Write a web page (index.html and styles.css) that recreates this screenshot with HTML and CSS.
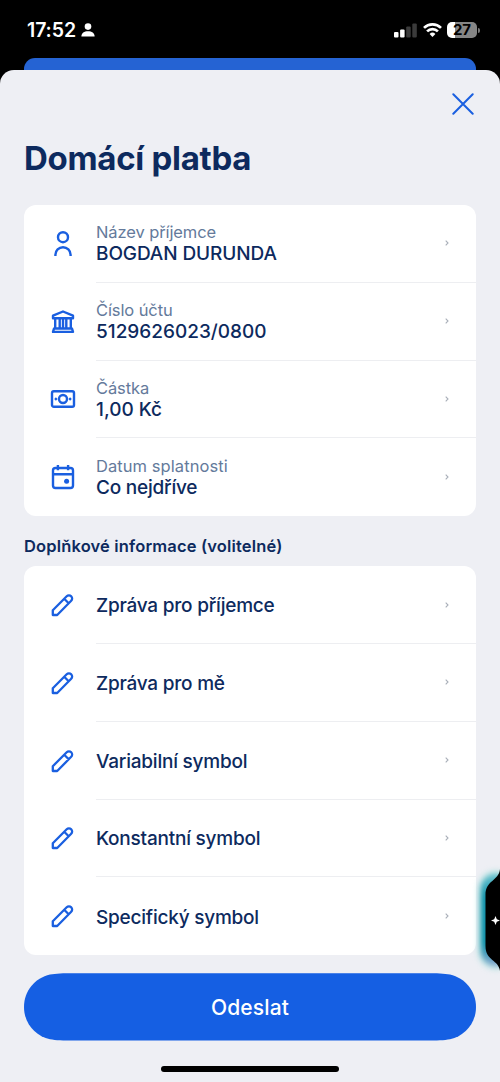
FILE: index.html
```html
<!DOCTYPE html>
<html lang="cs">
<head>
<meta charset="utf-8">
<title>Domácí platba</title>
<link rel="stylesheet" href="styles.css">
</head>
<body>
<svg class="defs" aria-hidden="true">
  <symbol id="pencil" viewBox="0 0 24 24"><path d="M2.800 22v-4.800L16.700 3.300a3.150 3.150 0 0 1 4.500 4.500L7.200 22zM14.200 5.800l4.500 4.500" fill="none" stroke="currentColor" stroke-width="2.300" stroke-linejoin="round"/></symbol>
  <symbol id="chevron" viewBox="0 0 4 6"><path d="M.7.6 3 3 .7 5.400" fill="none" stroke="currentColor" stroke-width="1.100"/></symbol>
</svg>
<header class="status">
  <div class="status-left">
    <span class="time">17:52</span>
    <svg width="14" height="14" viewBox="0 0 14 14" fill="#fff"><circle cx="7" cy="3.6" r="3.3"/><path d="M.4 13.4C.4 10 3.2 8.2 7 8.2s6.600 1.800 6.600 5.200z"/></svg>
  </div>
  <div class="status-right">
    <svg width="23" height="15" viewBox="0 0 23 15"><g fill="#fff"><rect x="0" y="9" width="4.500" height="5.500" rx="1.100"/><rect x="6.100" y="6.500" width="4.500" height="8" rx="1.100"/></g><g fill="#3b3b3b"><rect x="12.200" y="3.500" width="4.500" height="11" rx="1.100"/><rect x="18.300" y=".5" width="4.500" height="14" rx="1.100"/></g></svg>
    <svg class="wifi" width="19" height="14" viewBox="0 0 19 14" fill="none" stroke="#fff" stroke-width="2.700"><path d="M1 4.900a12.200 12.200 0 0 1 17 0M4.100 8.400a7.700 7.700 0 0 1 10.800 0"/><path d="M9.500 13.900 6.600 11a4.100 4.100 0 0 1 5.800 0z" fill="#fff" stroke="none"/></svg>
    <div class="battery">27</div>
    <span class="battery-tip"></span>
  </div>
</header>
<div class="behind"></div>
<main class="sheet">
  <div class="close-row"><svg width="22" height="22" viewBox="0 0 22 22"><path d="m1.300 1.300 19.400 19.400m0-19.400L1.300 20.700" stroke="#1a5fe0" stroke-width="2" stroke-linecap="round"/></svg></div>
  <h1>Domácí platba</h1>
  <section class="card details">
    <div class="row">
      <svg class="icon" viewBox="0 0 26 26"><circle cx="13" cy="6.200" r="5"/><path d="M5.400 25v-1.200a7.600 7.600 0 0 1 15.200 0V25"/></svg>
      <div class="cell"><div class="text"><span class="label">Název příjemce</span><span class="value caps">BOGDAN DURUNDA</span></div><svg class="chevron"><use href="#chevron"/></svg></div>
    </div>
    <div class="row">
      <svg class="icon" viewBox="0 0 26 26"><path d="M3 6.700 13 2.500l10 4.200v2.500H3zM5.200 9.200v10.300M9.700 9.500v10M13 9.500v10M16.300 9.500v10M20.800 9.200v10.300M4 19.500h18l1 3.400H3z"/></svg>
      <div class="cell"><div class="text"><span class="label">Číslo účtu</span><span class="value number">5129626023/0800</span></div><svg class="chevron"><use href="#chevron"/></svg></div>
    </div>
    <div class="row">
      <svg class="icon" viewBox="0 0 26 26"><rect x="2" y="5.300" width="22" height="15.400" rx="1.800"/><circle cx="13" cy="13" r="4"/><path class="solid" d="M4.200 13 5.900 11.300 7.600 13l-1.700 1.700zm14.200 0 1.700-1.700 1.700 1.700-1.700 1.700z"/></svg>
      <div class="cell"><div class="text"><span class="label">Částka</span><span class="value number">1,00 Kč</span></div><svg class="chevron"><use href="#chevron"/></svg></div>
    </div>
    <div class="row">
      <svg class="icon" viewBox="0 0 26 26"><rect x="3" y="4" width="20" height="20" rx="2.500"/><path d="M3 10.200h20M7.900 1v5.200M18.100 1v5.200"/><circle class="solid" cx="16.600" cy="17.200" r="2.500"/></svg>
      <div class="cell"><div class="text"><span class="label wide">Datum splatnosti</span><span class="value">Co nejdříve</span></div><svg class="chevron"><use href="#chevron"/></svg></div>
    </div>
  </section>
  <h2>Doplňkové informace (volitelné)</h2>
  <section class="card extras">
    <div class="row"><svg class="pencil"><use href="#pencil"/></svg><div class="cell"><span class="value">Zpráva pro příjemce</span><svg class="chevron"><use href="#chevron"/></svg></div></div>
    <div class="row"><svg class="pencil"><use href="#pencil"/></svg><div class="cell"><span class="value">Zpráva pro mě</span><svg class="chevron"><use href="#chevron"/></svg></div></div>
    <div class="row"><svg class="pencil"><use href="#pencil"/></svg><div class="cell"><span class="value">Variabilní symbol</span><svg class="chevron"><use href="#chevron"/></svg></div></div>
    <div class="row"><svg class="pencil"><use href="#pencil"/></svg><div class="cell"><span class="value">Konstantní symbol</span><svg class="chevron"><use href="#chevron"/></svg></div></div>
    <div class="row"><svg class="pencil"><use href="#pencil"/></svg><div class="cell"><span class="value">Specifický symbol</span><svg class="chevron"><use href="#chevron"/></svg></div></div>
  </section>
  <button class="submit"><svg class="pill" viewBox="0 0 452 68"><path d="M52 .3H400C414 .3 420 .5 426 1.600C441 5 452 18 452 34S441 63 426 66.200C420 67.300 414 67.500 400 67.500H52C38 67.500 32 67.300 26 66.200C11 63 0 50 0 34S11 5 26 1.600C32 .5 38 .3 52 .3Z" fill="#155fe3"/></svg><span>Odeslat</span></button>
  <div class="home"></div>
</main>
<div class="edge">
  <div class="glow"></div>
  <svg width="20" height="110" viewBox="0 0 20 110"><path d="M20 6C19 18 5.500 17 5.500 32V83C5.500 98 19 97 20 108Z" fill="#000"/><path d="m15.500 53 1.300 3.200 3.200 1.300-3.200 1.300-1.300 3.200-1.300-3.200-3.200-1.300 3.200-1.300z" fill="#fff"/></svg>
</div>
</body>
</html>
```
FILE: styles.css
```css
* { box-sizing: border-box; }
body {
  margin: 0;
  width: 500px;
  height: 1082px;
  overflow: hidden;
  position: relative;
  display: flex;
  flex-direction: column;
  background: #000;
  color: #0d2a5e;
  font-family: Inter, "Liberation Sans", sans-serif;
}
svg { display: block; flex: none; }
.defs { position: absolute; width: 0; height: 0; }
.status {
  height: 58px;
  padding: 2px 20px 0 27px;
  display: flex;
  align-items: center;
  justify-content: space-between;
  color: #fff;
}
.status-left, .status-right { display: flex; align-items: center; }
.status-left { gap: 5px; }
.time { font-size: 19.5px; font-weight: 600; letter-spacing: -0.1px; }
.wifi { margin: 0 5px 0 6px; }
.battery {
  width: 30px;
  height: 16px;
  border-radius: 5px;
  background: linear-gradient(90deg, #fff 28%, #858585 28%);
  color: #000;
  font-size: 15px;
  line-height: 16px;
  font-weight: 700;
  text-align: center;
}
.battery-tip { width: 2px; height: 5px; margin-left: 1px; border-radius: 0 2px 2px 0; background: #777; }
.behind { height: 12px; margin: 0 24px; border-radius: 11px 11px 0 0; background: #2563d3; }
.sheet {
  flex: 1;
  padding: 0 24px;
  display: flex;
  flex-direction: column;
  background: #eeeff4;
  border-radius: 14px 14px 0 0;
}
.close-row { height: 45px; padding: 23px 2.5px 0 0; display: flex; justify-content: flex-end; }
h1 {
  margin: 23px 0 0;
  height: 67px;
  line-height: 40px;
  font-size: 33px;
  font-weight: 700;
  letter-spacing: -0.28px;
  white-space: nowrap;
}
.card { background: #fff; border-radius: 12px; }
.row { height: 77.8px; padding-left: 26px; display: flex; align-items: center; }
.icon { width: 26px; height: 26px; fill: none; stroke: #1a5fe0; stroke-width: 2.4; stroke-linejoin: round; stroke-linecap: butt; }
.icon .solid { fill: #1a5fe0; stroke: none; }
.pencil { width: 24px; height: 24px; margin-right: 2px; color: #1a5fe0; }
.cell {
  flex: 1;
  height: 100%;
  margin-left: 20px;
  padding-right: 27px;
  display: flex;
  align-items: center;
  justify-content: space-between;
  border-bottom: 1px solid #edeef1;
}
.row:last-child .cell { border-bottom: 0; }
.text { display: flex; flex-direction: column; padding-top: 1px; }
.label { font-size: 16.5px; line-height: 21px; letter-spacing: -0.1px; color: #647a9b; }
.label.wide { letter-spacing: 0.07px; }
.value { font-size: 19px; line-height: 22px; font-weight: 500; letter-spacing: -0.22px; white-space: nowrap; }
.value.caps { letter-spacing: -0.1px; }
.value.number { letter-spacing: 0; }
.extras .value { padding-top: 3px; }
.chevron { width: 4px; height: 6px; color: #a9afb9; }
h2 { margin: 20px 0 9px; height: 21px; line-height: 21px; font-size: 16.5px; font-weight: 600; letter-spacing: 0.16px; white-space: nowrap; }
.submit {
  position: relative;
  height: 68px;
  margin-top: 18px;
  padding: 0;
  border: 0;
  background: none;
  color: #fff;
  font: 500 21px Inter, "Liberation Sans", sans-serif;
  letter-spacing: 0.15px;
}
.pill { position: absolute; inset: 0; width: 100%; height: 100%; }
.submit span { position: relative; }
.home { width: 178px; height: 6px; margin: 25px auto 0; border-radius: 3px; background: #000; }
.edge { position: absolute; right: 0; top: 863px; width: 20px; height: 110px; }
.glow {
  position: absolute;
  left: 1px;
  top: 11px;
  width: 30px;
  height: 92px;
  border-radius: 16px;
  background: linear-gradient(#6fc4d0, #0d8fa8 25%, #0d8fa8 75%, #8fa9d0);
  box-shadow: 0 0 5px 1px #67cfc8;
  filter: blur(2.5px);
}
.edge svg { position: relative; }
```
